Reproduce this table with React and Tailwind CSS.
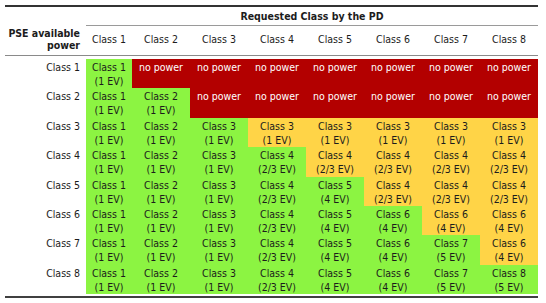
const EV = { 1: "1 EV", 2: "1 EV", 3: "1 EV", 4: "2/3 EV", 5: "4 EV", 6: "4 EV", 7: "5 EV", 8: "5 EV" };

// class the PSE falls back to when the PD asks for more than it can give
const FALLBACK = { 3: 3, 4: 4, 5: 4, 6: 6, 7: 6 };

const CLASSES = [1, 2, 3, 4, 5, 6, 7, 8];

function Cell({ pse, pd }) {
  if (pd <= pse) {
    return (
      <div className="bg-[#8cf442] text-center pt-[1px]">
        <div>Class {pd}</div>
        <div>({EV[pd]})</div>
      </div>
    );
  }
  if (pse <= 2) {
    return <div className="bg-[#b30000] text-white text-center pt-[1px]">no power</div>;
  }
  const c = FALLBACK[pse];
  return (
    <div className="bg-[#ffd447] text-center pt-[1px]">
      <div>Class {c}</div>
      <div>({EV[c]})</div>
    </div>
  );
}

export default function App() {
  return (
    <div
      className="w-[546px] h-[303px] bg-white text-[#1c1c1c] text-[10.5px] leading-[14px] overflow-hidden"
      style={{ fontFamily: '"DejaVu Sans Condensed", "DejaVu Sans", sans-serif' }}
    >
      <div className="ml-[5px] w-[533px] mt-[5px] border-t-2 border-[#333]">
        {/* super header */}
        <div className="grid grid-cols-[81px_1fr] h-[19px]">
          <div />
          <div className="border-b border-[#9a9a9a] flex items-center justify-center font-bold">
            Requested Class by the PD
          </div>
        </div>

        {/* header row */}
        <div className="grid grid-cols-[81px_46px_repeat(7,58px)] h-[30px] border-b border-[#8a8a8a] pb-[3px]">
          <div className="flex flex-col justify-center items-end pr-[6px] font-bold leading-[12px] text-right">
            <div>PSE available</div>
            <div>power</div>
          </div>
          {CLASSES.map((c) => (
            <div key={c} className="flex items-center justify-center">
              Class {c}
            </div>
          ))}
        </div>

        {/* body */}
        <div className="mt-[3px]">
          {CLASSES.map((pse) => (
            <div key={pse} className="grid grid-cols-[81px_46px_repeat(7,58px)] h-[29.375px]">
              <div className="text-right pr-[6px] pt-[1px]">Class {pse}</div>
              {CLASSES.map((pd) => (
                <Cell key={pd} pse={pse} pd={pd} />
              ))}
            </div>
          ))}
        </div>

        <div className="mt-[2px] border-b-2 border-[#404040]" />
      </div>
    </div>
  );
}
